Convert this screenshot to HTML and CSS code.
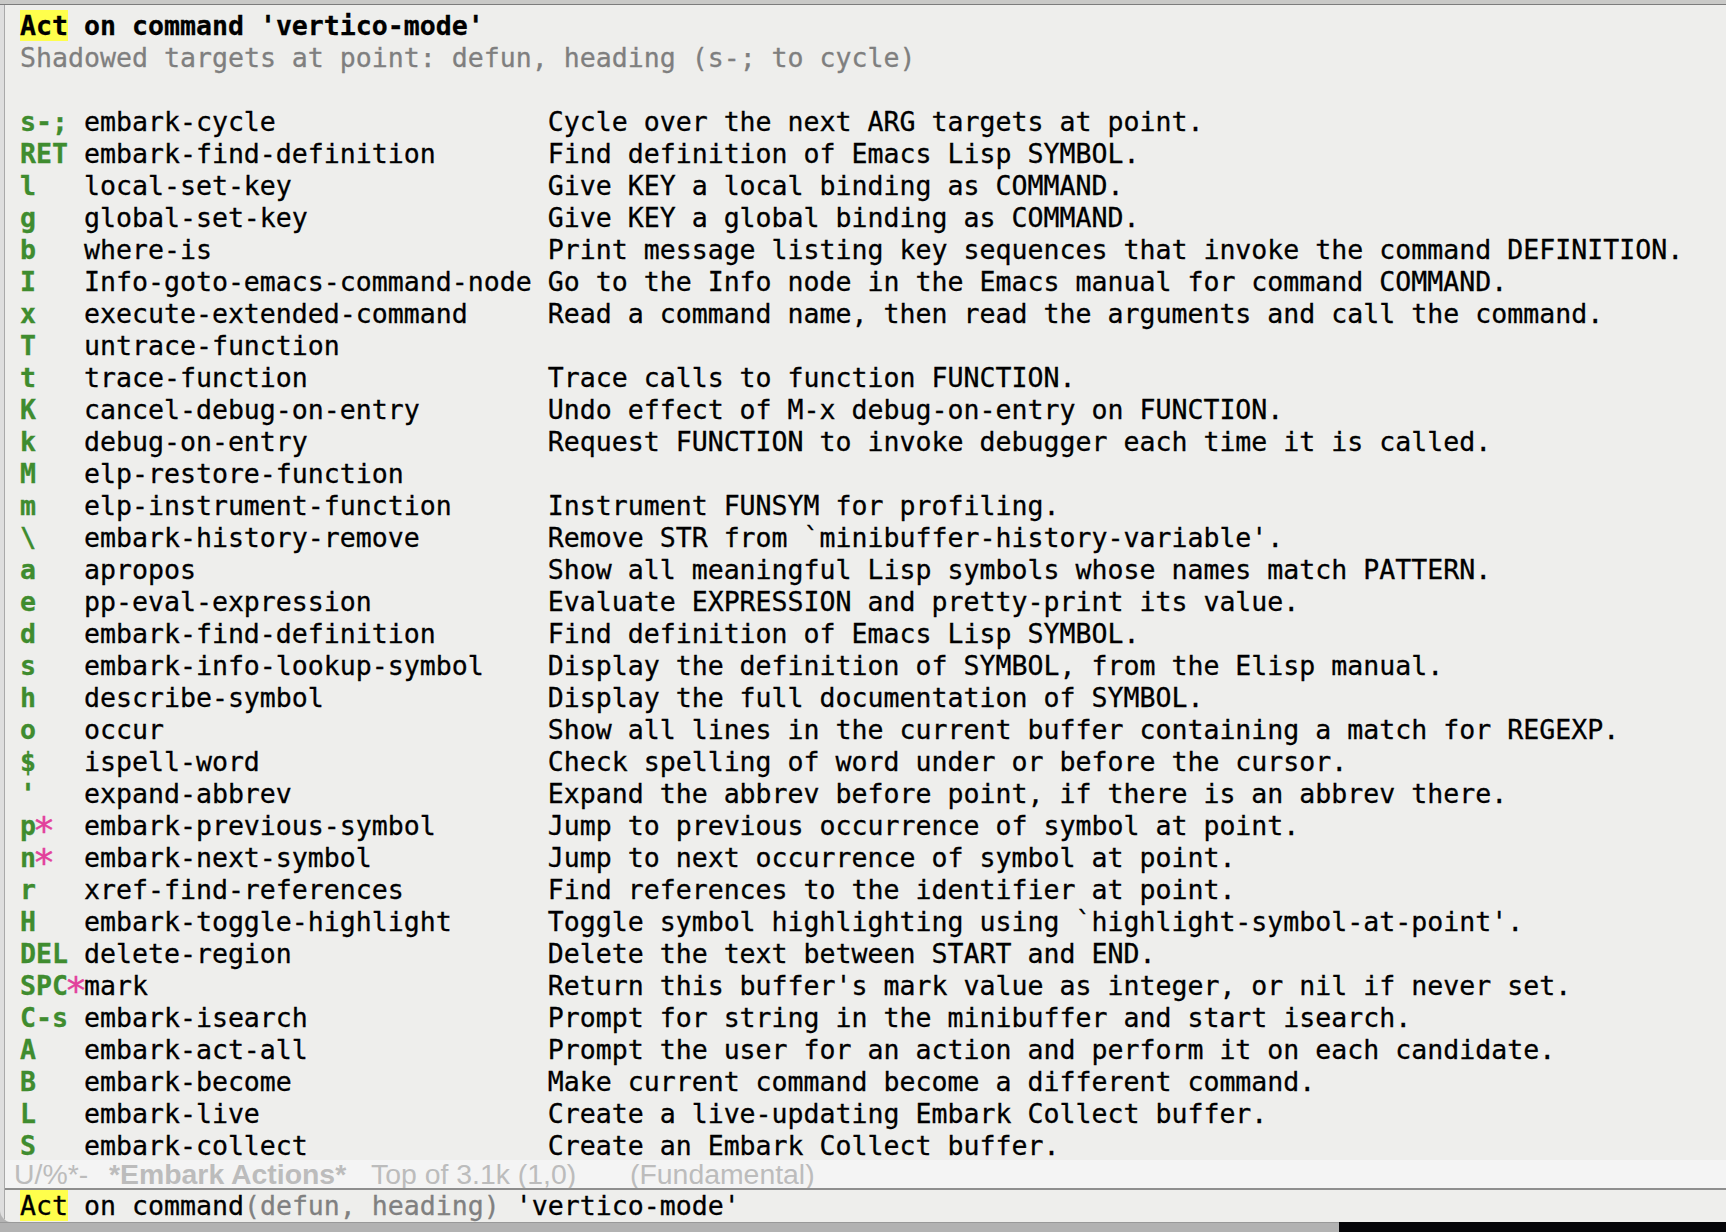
FILE: index.html
```html
<!DOCTYPE html>
<html lang="en">
<head>
<meta charset="utf-8">
<title>Embark Actions</title>
<link rel="stylesheet" href="styles.css">
</head>
<body>
<div class="frame">
  <div class="upper-modeline"></div>
  <div class="window">
    <div class="buffer">
      <div class="line title"><span class="hl">Act</span> on command 'vertico-mode'</div>
      <div class="line shadow">Shadowed targets at point: defun, heading (s-; to cycle)</div>
      <div class="line blank"></div>
      <div class="actions">
        <span class="key">s-;</span><span class="cmd">embark-cycle</span><span class="doc">Cycle over the next ARG targets at point.</span>
        <span class="key">RET</span><span class="cmd">embark-find-definition</span><span class="doc">Find definition of Emacs Lisp SYMBOL.</span>
        <span class="key">l</span><span class="cmd">local-set-key</span><span class="doc">Give KEY a local binding as COMMAND.</span>
        <span class="key">g</span><span class="cmd">global-set-key</span><span class="doc">Give KEY a global binding as COMMAND.</span>
        <span class="key">b</span><span class="cmd">where-is</span><span class="doc">Print message listing key sequences that invoke the command DEFINITION.</span>
        <span class="key">I</span><span class="cmd">Info-goto-emacs-command-node</span><span class="doc">Go to the Info node in the Emacs manual for command COMMAND.</span>
        <span class="key">x</span><span class="cmd">execute-extended-command</span><span class="doc">Read a command name, then read the arguments and call the command.</span>
        <span class="key">T</span><span class="cmd">untrace-function</span><span class="doc"></span>
        <span class="key">t</span><span class="cmd">trace-function</span><span class="doc">Trace calls to function FUNCTION.</span>
        <span class="key">K</span><span class="cmd">cancel-debug-on-entry</span><span class="doc">Undo effect of M-x debug-on-entry on FUNCTION.</span>
        <span class="key">k</span><span class="cmd">debug-on-entry</span><span class="doc">Request FUNCTION to invoke debugger each time it is called.</span>
        <span class="key">M</span><span class="cmd">elp-restore-function</span><span class="doc"></span>
        <span class="key">m</span><span class="cmd">elp-instrument-function</span><span class="doc">Instrument FUNSYM for profiling.</span>
        <span class="key">\</span><span class="cmd">embark-history-remove</span><span class="doc">Remove STR from `minibuffer-history-variable'.</span>
        <span class="key">a</span><span class="cmd">apropos</span><span class="doc">Show all meaningful Lisp symbols whose names match PATTERN.</span>
        <span class="key">e</span><span class="cmd">pp-eval-expression</span><span class="doc">Evaluate EXPRESSION and pretty-print its value.</span>
        <span class="key">d</span><span class="cmd">embark-find-definition</span><span class="doc">Find definition of Emacs Lisp SYMBOL.</span>
        <span class="key">s</span><span class="cmd">embark-info-lookup-symbol</span><span class="doc">Display the definition of SYMBOL, from the Elisp manual.</span>
        <span class="key">h</span><span class="cmd">describe-symbol</span><span class="doc">Display the full documentation of SYMBOL.</span>
        <span class="key">o</span><span class="cmd">occur</span><span class="doc">Show all lines in the current buffer containing a match for REGEXP.</span>
        <span class="key">$</span><span class="cmd">ispell-word</span><span class="doc">Check spelling of word under or before the cursor.</span>
        <span class="key">'</span><span class="cmd">expand-abbrev</span><span class="doc">Expand the abbrev before point, if there is an abbrev there.</span>
        <span class="key">p<span class="rep">*</span></span><span class="cmd">embark-previous-symbol</span><span class="doc">Jump to previous occurrence of symbol at point.</span>
        <span class="key">n<span class="rep">*</span></span><span class="cmd">embark-next-symbol</span><span class="doc">Jump to next occurrence of symbol at point.</span>
        <span class="key">r</span><span class="cmd">xref-find-references</span><span class="doc">Find references to the identifier at point.</span>
        <span class="key">H</span><span class="cmd">embark-toggle-highlight</span><span class="doc">Toggle symbol highlighting using `highlight-symbol-at-point'.</span>
        <span class="key">DEL</span><span class="cmd">delete-region</span><span class="doc">Delete the text between START and END.</span>
        <span class="key">SPC<span class="rep">*</span></span><span class="cmd">mark</span><span class="doc">Return this buffer's mark value as integer, or nil if never set.</span>
        <span class="key">C-s</span><span class="cmd">embark-isearch</span><span class="doc">Prompt for string in the minibuffer and start isearch.</span>
        <span class="key">A</span><span class="cmd">embark-act-all</span><span class="doc">Prompt the user for an action and perform it on each candidate.</span>
        <span class="key">B</span><span class="cmd">embark-become</span><span class="doc">Make current command become a different command.</span>
        <span class="key">L</span><span class="cmd">embark-live</span><span class="doc">Create a live-updating Embark Collect buffer.</span>
        <span class="key">S</span><span class="cmd">embark-collect</span><span class="doc">Create an Embark Collect buffer.</span>
      </div>
    </div>
    <div class="modeline">
      <span class="ml-status">U/%*-</span>
      <span class="ml-buf">*Embark Actions*</span>
      <span class="ml-pos">Top of 3.1k (1,0)</span>
      <span class="ml-mode">(Fundamental)</span>
    </div>
    <div class="minibuffer"><span class="hl">Act</span> on command<span class="dim">(defun, heading)</span> 'vertico-mode'</div>
  </div>
</div>
<div class="desktop">
  <div class="desk-gray"></div>
  <div class="desk-dark"></div>
</div>
</body>
</html>
```

FILE: styles.css
```css
html, body {
  margin: 0;
  padding: 0;
}

body {
  width: 1726px;
  height: 1232px;
  overflow: hidden;
  background: #b4b4b4;
  font-family: "DejaVu Sans Mono", monospace;
}

.frame {
  height: 1222px;
  display: flex;
  flex-direction: column;
  background: #dedede;
  border-bottom-left-radius: 12px;
  overflow: hidden;
}

.upper-modeline {
  height: 4px;
  flex: none;
  background: #c9c9c7;
  border-bottom: 1px solid #7c7c7c;
}

.window {
  flex: 1;
  display: flex;
  flex-direction: column;
  margin-left: 4px;
  border-left: 1px solid #a9a9a9;
  background: #eeeeec;
  min-height: 0;
}

.buffer {
  height: 1155px;
  flex: none;
  overflow: hidden;
  padding: 5px 0 0 15px;
  box-sizing: border-box;
  font-size: 26.575px;
  line-height: 32px;
  color: #000;
  -webkit-text-stroke: 0.3px currentColor;
}

.line {
  height: 32px;
  white-space: pre;
}

.title {
  font-weight: bold;
}

.hl {
  background: #ffff4c;
}

.shadow {
  color: #7f7f7f;
}

.actions {
  display: grid;
  grid-template-columns: 4ch 29ch auto;
  grid-auto-rows: 32px;
}

.key,
.cmd,
.doc {
  white-space: pre;
}

.key {
  color: #3f8c2f;
  font-weight: bold;
}

.rep {
  display: inline-block;
  color: #e2419b;
  font-weight: normal;
  transform: translateY(5px) scale(1.4);
}

.modeline {
  height: 28px;
  flex: none;
  background: #f4f4f4;
  border-bottom: 2px solid #8e8e8e;
  display: flex;
  align-items: center;
  padding-left: 9px;
  font-family: "Liberation Sans", Arial, sans-serif;
  font-size: 28.4px;
  color: #bcbcbc;
  overflow: hidden;
}

.modeline span {
  white-space: pre;
}

.ml-status {
  width: 95px;
}

.ml-buf {
  width: 262px;
  font-weight: bold;
}

.ml-pos {
  width: 259px;
}

.minibuffer {
  height: 32px;
  flex: none;
  padding-left: 15px;
  font-size: 26.575px;
  line-height: 32px;
  white-space: pre;
  color: #000;
  -webkit-text-stroke: 0.3px currentColor;
}

.dim {
  color: #808080;
}

.desktop {
  height: 10px;
  display: flex;
}

.desk-gray {
  width: 1339px;
  background: #b2b2b2;
  border-top: 1px solid #999;
}

.desk-dark {
  flex: 1;
  background: #050508;
}
```
